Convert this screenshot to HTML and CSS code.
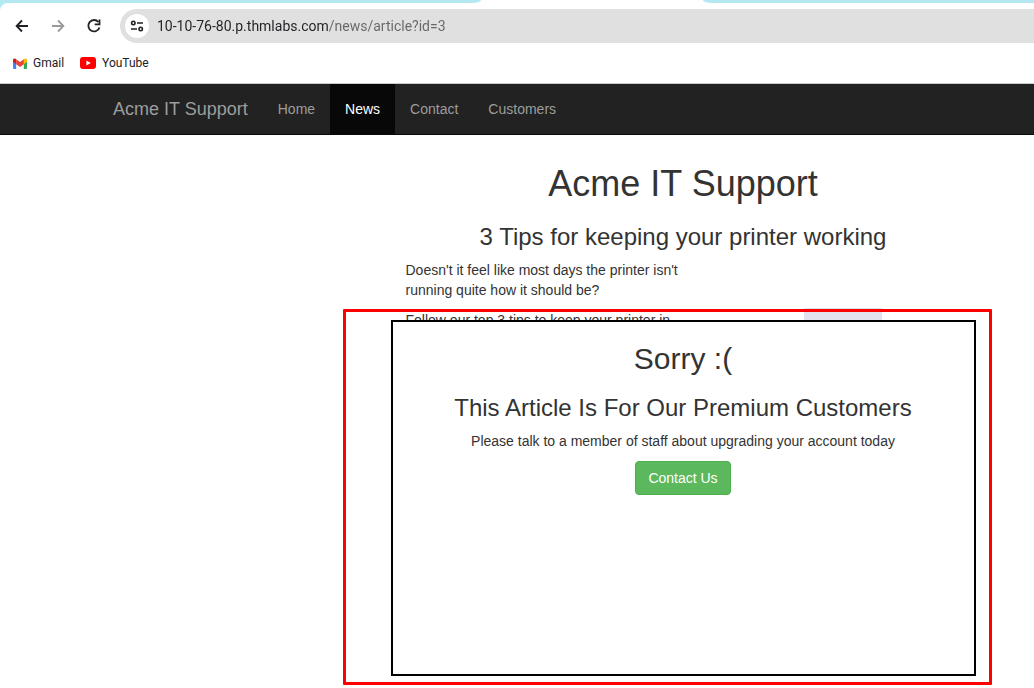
FILE: index.html
```html
<!DOCTYPE html>
<html lang="en">
<head>
<meta charset="utf-8">
<meta name="viewport" content="width=device-width, initial-scale=1">
<title>Acme IT Support</title>
<link rel="stylesheet" href="styles.css">
</head>
<body>
<header class="browser">
  <div class="tabstrip"><div class="tabstrip-left"></div><div class="tab-active"></div><div class="tabstrip-right"></div></div>
  <div class="chrome">
    <div class="toolbar">
      <button class="tool" type="button" aria-label="Back">
        <svg width="20" height="20" viewBox="0 0 20 20" fill="none" stroke="#202124" stroke-width="1.8"><path d="M16 10H4.8M10 4.5 4.6 10l5.4 5.5"/></svg>
      </button>
      <button class="tool" type="button" aria-label="Forward" disabled>
        <svg width="20" height="20" viewBox="0 0 20 20" fill="none" stroke="#9a9a9a" stroke-width="1.8"><path d="M4 10h11.2M10 4.5l5.4 5.5-5.4 5.5"/></svg>
      </button>
      <button class="tool" type="button" aria-label="Reload">
        <svg width="20" height="20" viewBox="0 0 20 20" fill="none" stroke="#202124" stroke-width="1.8"><path d="M14.4 6A5.7 5.7 0 1 0 15.5 11.4"/><path d="M15.5 3.6v4.8h-4.8"/></svg>
      </button>
      <div class="omnibox">
        <button class="site-info" type="button" aria-label="View site information">
          <svg width="16" height="16" viewBox="0 0 16 16" fill="none" stroke="#202124" stroke-width="1.6"><circle cx="4.3" cy="5" r="1.7"/><path d="M8 5h6M2 11h6"/><circle cx="11.7" cy="11" r="1.7"/></svg>
        </button>
        <input class="url" type="text" aria-label="Address" value="10-10-76-80.p.thmlabs.com/news/article?id=3">
      </div>
    </div>
    <nav class="bookmarks" aria-label="Bookmarks">
      <a class="bookmark" href="#">
        <svg width="14" height="11" viewBox="0 0 14 11"><path fill="#4285f4" d="M0 2h3.2v9H1a1 1 0 0 1-1-1z"/><path fill="#34a853" d="M10.8 2H14v8a1 1 0 0 1-1 1h-2.2z"/><path fill="#fbbc04" d="M10.8 1.2C12 0 14 .2 14 2v1.8l-3.2 2.4z"/><path fill="#c5221f" d="M0 2C0 .2 2 0 3.2 1.2v5L0 3.8z"/><path fill="#ea4335" d="M3.2 1.2 7 4.1l3.8-2.9v5L7 9.1 3.2 6.2z"/></svg>
        <span>Gmail</span>
      </a>
      <a class="bookmark" href="#">
        <svg width="16" height="12" viewBox="0 0 16 12"><rect width="16" height="12" rx="3" fill="#f00"/><path fill="#fff" d="M6.4 3.4v5.2L10.8 6z"/></svg>
        <span>YouTube</span>
      </a>
    </nav>
  </div>
</header>

<nav class="navbar">
  <a class="brand" href="#">Acme IT Support</a>
  <a class="nav-link" href="#">Home</a>
  <a class="nav-link active" href="#" aria-current="page">News</a>
  <a class="nav-link" href="#">Contact</a>
  <a class="nav-link" href="#">Customers</a>
</nav>

<main class="page">
  <div class="content">
    <h1 class="title">Acme IT Support</h1>
    <article class="article">
      <h3 class="subtitle">3 Tips for keeping your printer working</h3>
      <div class="columns">
        <div class="copy">
          <p>Doesn't it feel like most days the printer isn't running quite how it should be?</p>
          <p>Follow our top 3 tips to keep your printer in</p>
        </div>
        <div class="picture"><div class="paper"></div></div>
      </div>
      <div class="highlight"></div>
      <section class="paywall">
        <h2 class="sorry">Sorry :(</h2>
        <h3 class="subtitle">This Article Is For Our Premium Customers</h3>
        <p>Please talk to a member of staff about upgrading your account today</p>
        <button class="contact" type="button">Contact Us</button>
      </section>
    </article>
  </div>
</main>
</body>
</html>
```
FILE: styles.css
```css
* { box-sizing: border-box; }

body {
  margin: 0;
  background: #fff;
  color: #333;
  font-family: "Liberation Sans", Arial, sans-serif;
  font-size: 14px;
  line-height: 20px;
}

button, input { font: inherit; }
a { text-decoration: none; }

/* Browser frame */
.browser {
  background: #b4e9f1;
  font-family: Roboto, "Noto Sans", sans-serif;
}

.tabstrip {
  display: flex;
  height: 3px;
  background: #fff;
}

.tabstrip-left {
  width: 481px;
  background: #b4e9f1;
  border-bottom-right-radius: 8px 3px;
}

.tab-active { width: 222px; }

.tabstrip-right {
  flex: 1;
  background: #b4e9f1;
  border-bottom-left-radius: 8px 3px;
}

.chrome {
  background: #fff;
  border-top-left-radius: 8px;
  border-bottom: 1px solid #ccc;
}

.toolbar {
  display: flex;
  align-items: center;
  padding: 6px 0 0 4px;
}

.tool {
  display: flex;
  justify-content: center;
  width: 36px;
  padding: 0;
  border: 0;
  background: none;
}

.omnibox {
  display: flex;
  flex: 1;
  align-items: center;
  gap: 8px;
  height: 34px;
  margin-left: 8px;
  padding-left: 5px;
  border-radius: 17px 0 0 17px;
  background: #e0e0e0;
}

.site-info {
  display: flex;
  align-items: center;
  justify-content: center;
  width: 24px;
  height: 24px;
  padding: 0;
  border: 0;
  border-radius: 50%;
  background: #fff;
}

.url {
  flex: 1;
  min-width: 0;
  padding: 0;
  border: 0;
  outline: 0;
  color: #333;
  font-size: 14px;
  background: linear-gradient(to right, #202124 171px, #666 171px);
  -webkit-background-clip: text;
  background-clip: text;
  -webkit-text-fill-color: transparent;
}

.bookmarks {
  display: flex;
  align-items: center;
  gap: 16px;
  height: 40px;
  padding-left: 13px;
}

.bookmark {
  display: flex;
  align-items: center;
  gap: 6px;
  color: #202124;
  font-size: 12px;
}

/* Site navigation */
.navbar {
  display: flex;
  padding-left: 98px;
  background: #222;
  border-bottom: 1px solid #080808;
}

.brand, .nav-link {
  padding: 15px;
  color: #9d9d9d;
}

.brand { font-size: 18px; }

.nav-link.active {
  background: #080808;
  color: #fff;
}

/* Article */
.page {
  padding: 29px 0 0 332px;
  overflow: hidden;
}

.content {
  width: 100%;
  max-width: 585px;
  margin: 0 auto;
}

h1, h2, h3 {
  margin: 0;
  font-weight: 400;
  text-align: center;
}

p { margin: 0 0 10px; }

.title {
  font-size: 36px;
  line-height: 40px;
}

.article {
  position: relative;
  min-height: 484px;
  padding-top: 20px;
}

.subtitle {
  margin-bottom: 10px;
  font-size: 24px;
  line-height: 26px;
}

.columns {
  display: grid;
  grid-template-columns: 1fr 1fr;
  padding-left: 15px;
}

.picture {
  display: flex;
  justify-content: center;
  padding-top: 48px;
}

.paper {
  width: 78px;
  height: 14px;
  margin-left: 20px;
  background: #e4e1ee;
}

.paywall {
  position: absolute;
  inset: 116px 0 12px;
  padding: 20px 15px;
  border: 2px solid #000;
  background: #fff;
  text-align: center;
}

.highlight {
  position: absolute;
  inset: 105px -16px 3px -48px;
  border: 3px solid #f00;
  border-radius: 1px;
}

.sorry {
  margin-bottom: 20px;
  font-size: 30px;
  line-height: 33px;
}

.contact {
  padding: 6px 12px;
  border: 1px solid #4cae4c;
  border-radius: 4px;
  background: #5cb85c;
  color: #fff;
}
```
